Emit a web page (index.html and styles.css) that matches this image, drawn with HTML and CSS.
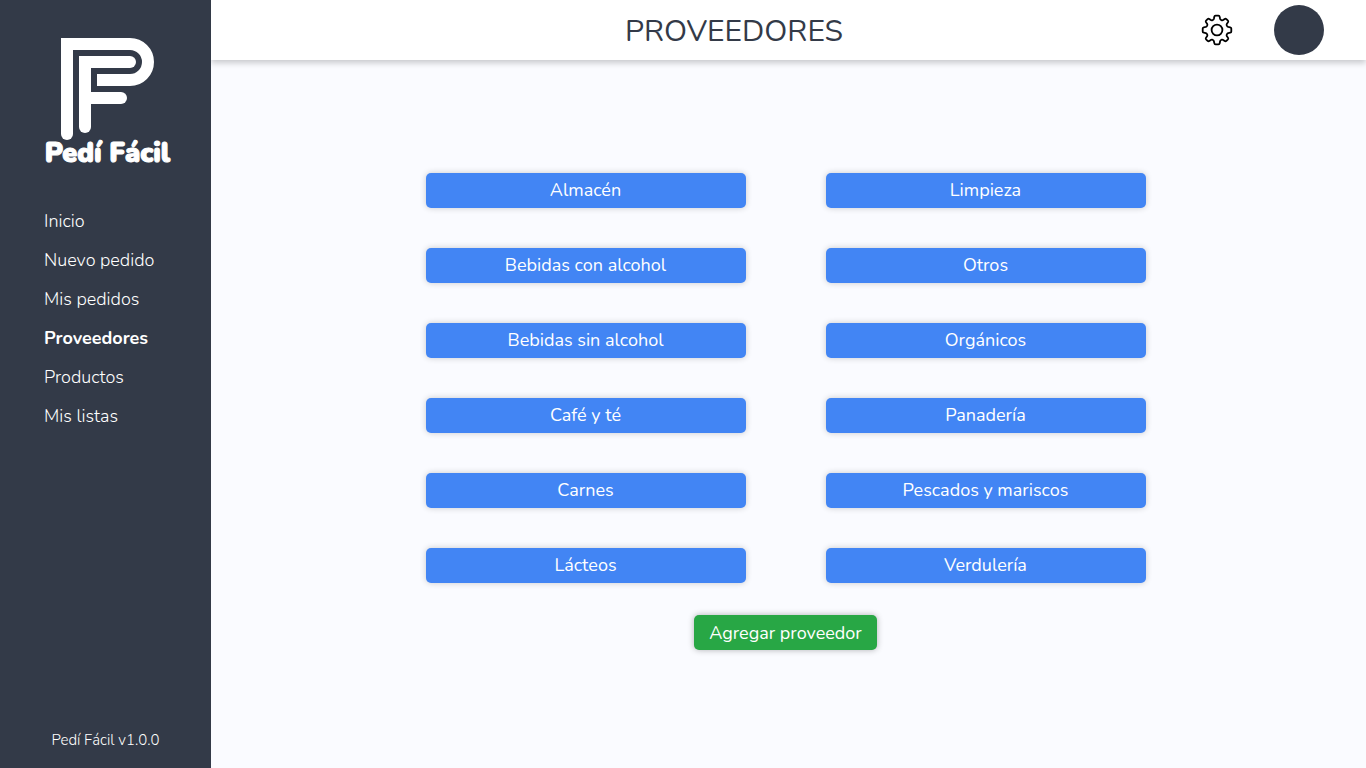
FILE: index.html
```html
<!DOCTYPE html>
<html lang="es">
<head>
<meta charset="utf-8">
<title>Pedí Fácil - Proveedores</title>
<link rel="stylesheet" href="styles.css">
</head>
<body>
<div class="app">
  <aside class="sidebar">
    <a class="brand" href="#" aria-label="Pedí Fácil">
      <svg class="brand-mark" viewBox="0 0 94 102" aria-hidden="true">
        <path class="brand-line" d="M6 96V6H69a18 18 0 0 1 0 36H36"/>
        <path class="brand-line" d="M24 89V24H69M24 60H60"/>
        <g class="brand-cap"><circle cx="6" cy="96" r="6"/><circle cx="24" cy="89" r="6"/><circle cx="69" cy="24" r="6"/><circle cx="60" cy="60" r="6"/></g>
      </svg>
      <span class="brand-name">Pedí Fácil</span>
    </a>
    <nav class="menu">
      <a href="#">Inicio</a>
      <a href="#">Nuevo pedido</a>
      <a href="#">Mis pedidos</a>
      <a class="active" href="#" aria-current="page">Proveedores</a>
      <a href="#">Productos</a>
      <a href="#">Mis listas</a>
    </nav>
    <p class="version">Pedí Fácil v1.0.0</p>
  </aside>
  <div class="page">
    <header class="topbar">
      <h1 class="title">PROVEEDORES</h1>
      <button class="settings" type="button" aria-label="Configuración">
        <svg viewBox="-16 -16 32 32" aria-hidden="true">
          <path d="M-1.5 -14.3H1.5Q2.5 -14.3 2.7 -13.2L3.1 -11.2Q3.3 -10.4 4.1 -10L4.7 -9.7Q5.5 -9.4 6.2 -9.9L7.7 -11Q8.6 -11.6 9.4 -10.9L10.9 -9.4Q11.6 -8.6 11 -7.7L9.9 -6.2Q9.4 -5.5 9.7 -4.7L10 -4.1Q10.4 -3.3 11.2 -3.1L13.2 -2.7Q14.3 -2.5 14.3 -1.5V1.5Q14.3 2.5 13.2 2.7L11.2 3.1Q10.4 3.3 10 4.1L9.7 4.7Q9.4 5.5 9.9 6.2L11 7.7Q11.6 8.6 10.9 9.4L9.4 10.9Q8.6 11.6 7.7 11L6.2 9.9Q5.5 9.4 4.7 9.7L4.1 10Q3.3 10.4 3.1 11.2L2.7 13.2Q2.5 14.3 1.5 14.3H-1.5Q-2.5 14.3 -2.7 13.2L-3.1 11.2Q-3.3 10.4 -4.1 10L-4.7 9.7Q-5.5 9.4 -6.2 9.9L-7.7 11Q-8.6 11.6 -9.4 10.9L-10.9 9.4Q-11.6 8.6 -11 7.7L-9.9 6.2Q-9.4 5.5 -9.7 4.7L-10 4.1Q-10.4 3.3 -11.2 3.1L-13.2 2.7Q-14.3 2.5 -14.3 1.5V-1.5Q-14.3 -2.5 -13.2 -2.7L-11.2 -3.1Q-10.4 -3.3 -10 -4.1L-9.7 -4.7Q-9.4 -5.5 -9.9 -6.2L-11 -7.7Q-11.6 -8.6 -10.9 -9.4L-9.4 -10.9Q-8.6 -11.6 -7.7 -11L-6.2 -9.9Q-5.5 -9.4 -4.7 -9.7L-4.1 -10Q-3.3 -10.4 -3.1 -11.2L-2.7 -13.2Q-2.5 -14.3 -1.5 -14.3Z"/>
          <circle r="5.4"/>
        </svg>
      </button>
      <button class="avatar" type="button" aria-label="Cuenta"></button>
    </header>
    <main class="content">
      <div class="categories">
        <button class="btn" type="button">Almacén</button>
        <button class="btn" type="button">Limpieza</button>
        <button class="btn" type="button">Bebidas con alcohol</button>
        <button class="btn" type="button">Otros</button>
        <button class="btn" type="button">Bebidas sin alcohol</button>
        <button class="btn" type="button">Orgánicos</button>
        <button class="btn" type="button">Café y té</button>
        <button class="btn" type="button">Panadería</button>
        <button class="btn" type="button">Carnes</button>
        <button class="btn" type="button">Pescados y mariscos</button>
        <button class="btn" type="button">Lácteos</button>
        <button class="btn" type="button">Verdulería</button>
      </div>
      <button class="btn btn-add" type="button">Agregar proveedor</button>
    </main>
  </div>
</div>
</body>
</html>
```
FILE: styles.css
```css
* { box-sizing: border-box; }
body {
  margin: 0;
  background: #fafbff;
  color: #333a48;
  font-family: Nunito, Lato, sans-serif;
  font-size: 18px;
}
button { font: inherit; border: 0; padding: 0; cursor: pointer; }
.app { display: flex; min-height: 100vh; }
.sidebar {
  z-index: 1;
  flex: 0 0 211px;
  display: flex;
  flex-direction: column;
  padding: 38px 0 16px;
  background: #333a48;
  color: #fff;
}
.brand {
  display: flex;
  flex-direction: column;
  align-items: center;
  padding-left: 4px;
  color: #fff;
  text-decoration: none;
}
.brand-mark { width: 94px; height: 102px; }
.brand-line { fill: none; stroke: #fff; stroke-width: 12; }
.brand-cap { fill: #fff; }
.brand-name {
  font-size: 27px;
  font-weight: 900;
  line-height: 28px;
  -webkit-text-stroke: 1px #fff;
}
.menu {
  display: flex;
  flex-direction: column;
  gap: 15px;
  padding: 41px 0 0 44px;
}
.menu a {
  color: #fff;
  font-weight: 300;
  line-height: 24px;
  text-decoration: none;
}
.menu .active { font-weight: 700; }
.version {
  margin: auto 0 0;
  font-size: 15px;
  font-weight: 300;
  line-height: 24px;
  text-align: center;
}
.page { flex: 1; display: flex; flex-direction: column; }
.topbar {
  display: flex;
  align-items: center;
  height: 60px;
  padding: 0 42px 0 56px;
  background: #fff;
  box-shadow: 0 3px 6px rgba(0, 0, 0, .2);
}
.title {
  flex: 1;
  margin: 0;
  padding-top: 4px;
  font-size: 30px;
  font-weight: 400;
  line-height: 56px;
  text-align: center;
}
.settings { width: 32px; height: 32px; margin-right: 41px; background: none; }
.settings svg { display: block; fill: none; stroke: #000; stroke-width: 1.8; stroke-linejoin: round; }
.avatar { width: 50px; height: 50px; border-radius: 50%; background: #333a48; }
.content {
  display: flex;
  flex-direction: column;
  align-items: center;
  gap: 32px;
  padding: 113px 6px 40px 0;
}
.categories {
  display: grid;
  grid-template-columns: repeat(2, 320px);
  gap: 40px 80px;
}
.btn {
  height: 35px;
  padding-bottom: 2px;
  border-radius: 5px;
  background: #4285f4;
  color: #fff;
  box-shadow: 0 0 6px rgba(0, 0, 0, .2);
}
.btn-add { padding: 0 15px; background: #28a745; box-shadow: 0 0 6px rgba(0, 0, 0, .3); }
```
